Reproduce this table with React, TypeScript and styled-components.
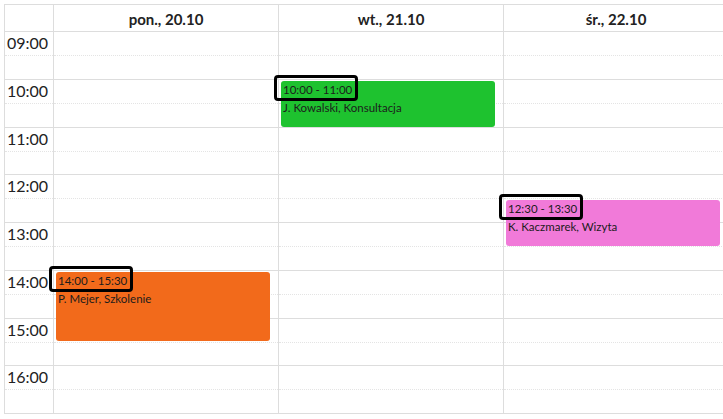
import React from "react";
import styled, { createGlobalStyle } from "styled-components";

const HOUR = 47.75;
const FIRST_HOUR = 9;
const HOURS = [9, 10, 11, 12, 13, 14, 15, 16];

type CalEvent = {
  start: number;
  end: number;
  label: string;
  who: string;
  color: string;
};

const DAYS: { title: string; events: CalEvent[] }[] = [
  {
    title: "pon., 20.10",
    events: [{ start: 14, end: 15.5, label: "14:00 - 15:30", who: "P. Mejer, Szkolenie", color: "#f26a1b" }],
  },
  {
    title: "wt., 21.10",
    events: [{ start: 10, end: 11, label: "10:00 - 11:00", who: "J. Kowalski, Konsultacja", color: "#1ec22f" }],
  },
  {
    title: "śr., 22.10",
    events: [{ start: 12.5, end: 13.5, label: "12:30 - 13:30", who: "K. Kaczmarek, Wizyta", color: "#f17ad9" }],
  },
];

const GlobalStyle = createGlobalStyle`
  html, body {
    margin: 0;
    padding: 0;
    overflow: hidden;
    background: #ffffff;
  }
  body {
    font-family: Lato, "Open Sans", sans-serif;
    color: #222222;
  }
`;

const Page = styled.div`
  padding: 4px 0 0 4px;
`;

const Table = styled.div`
  display: flex;
  flex-direction: column;
  width: max-content;
  border-top: 1px solid #dddddd;
  border-left: 1px solid #dddddd;
`;

const Row = styled.div`
  display: grid;
  grid-template-columns: 49px repeat(3, 225px);
`;

const HeaderCell = styled.div`
  height: 26px;
  line-height: 28px;
  text-align: center;
  font-size: 15px;
  font-weight: 700;
  color: #222222;
  border-right: 1px solid #dddddd;
  border-bottom: 1px solid #dddddd;
`;

const Column = styled.div`
  position: relative;
  border-right: 1px solid #dddddd;
`;

const Slot = styled.div`
  position: relative;
  box-sizing: border-box;
  height: ${HOUR}px;
  border-bottom: 1px solid #dddddd;

  &::before {
    content: "";
    position: absolute;
    left: 0;
    right: 0;
    top: 23px;
    border-top: 1px dotted #e4e4e4;
  }
`;

const HourLabel = styled(Slot)`
  font-size: 16px;
  line-height: 22px;
  padding-left: 2px;
  color: #222222;
`;

const Event = styled.div<{ $bg: string }>`
  position: absolute;
  left: 2px;
  right: 8px;
  box-sizing: border-box;
  padding: 0 2px;
  border-radius: 3px;
  background: ${(p) => p.$bg};
  font-size: 11.5px;
  line-height: 18px;
  color: #1c1c1c;
  z-index: 1;
`;

const EventTime = styled.div`
  position: relative;

  &::after {
    content: "";
    position: absolute;
    left: -9px;
    top: -6px;
    width: 84px;
    height: 26px;
    box-sizing: border-box;
    border: 3px solid #000000;
    border-radius: 4px;
  }
`;

export default function App() {
  return (
    <Page>
      <GlobalStyle />
      <Table>
        <Row>
          <HeaderCell />
          {DAYS.map((d) => (
            <HeaderCell key={d.title}>{d.title}</HeaderCell>
          ))}
        </Row>
        <Row>
          <Column>
            {HOURS.map((h) => (
              <HourLabel key={h}>{String(h).padStart(2, "0")}:00</HourLabel>
            ))}
          </Column>
          {DAYS.map((d) => (
            <Column key={d.title}>
              {HOURS.map((h) => (
                <Slot key={h} />
              ))}
              {d.events.map((ev) => (
                <Event
                  key={ev.label}
                  $bg={ev.color}
                  style={{
                    top: (ev.start - FIRST_HOUR) * HOUR + 1,
                    height: (ev.end - ev.start) * HOUR - 2,
                  }}
                >
                  <EventTime>{ev.label}</EventTime>
                  <div>{ev.who}</div>
                </Event>
              ))}
            </Column>
          ))}
        </Row>
      </Table>
    </Page>
  );
}
